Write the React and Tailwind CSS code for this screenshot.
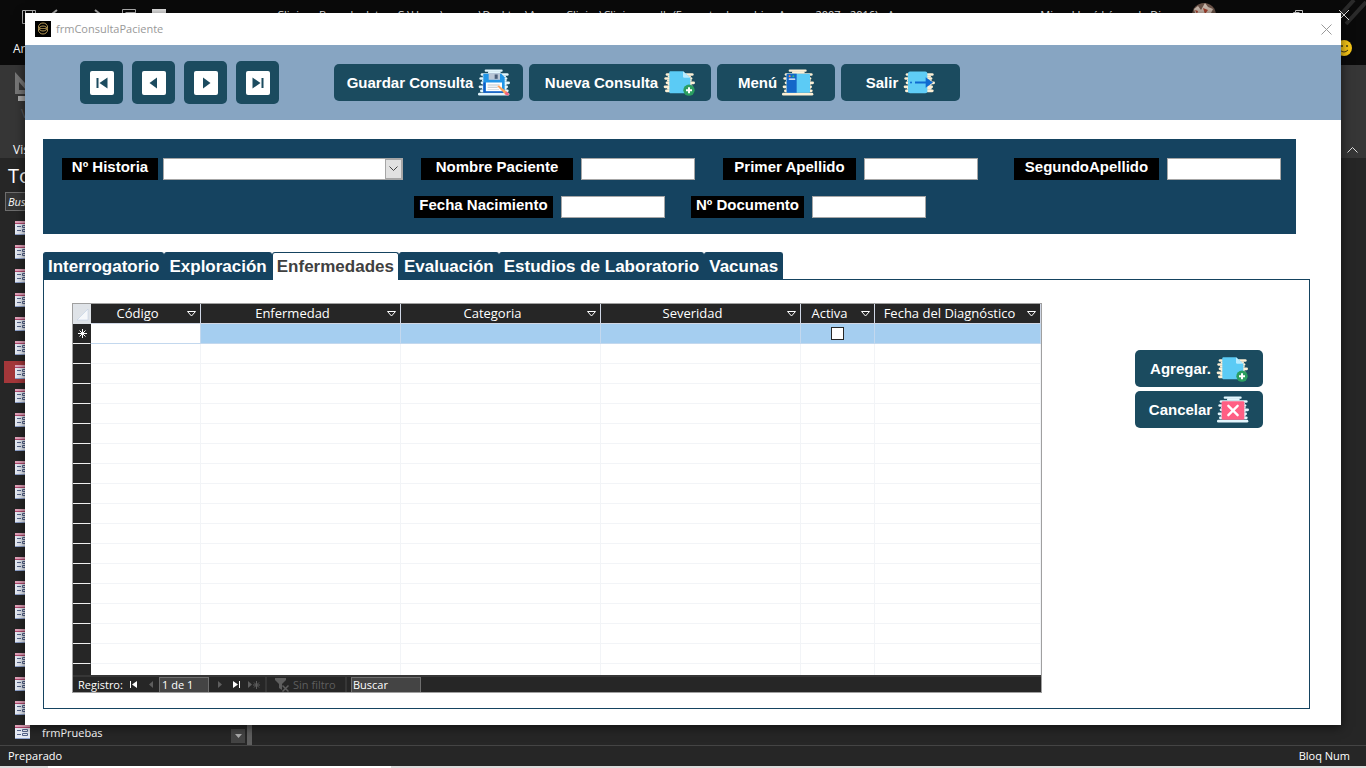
import React, { useState } from 'react';

const TABS = [
    'Interrogatorio',
    'Exploración',
    'Enfermedades',
    'Evaluación',
    'Estudios de Laboratorio',
    'Vacunas',
];

const COLUMNS = [
    { name: 'Código', width: 'w-[110px]' },
    { name: 'Enfermedad', width: 'w-[200px]' },
    { name: 'Categoria', width: 'w-[200px]' },
    { name: 'Severidad', width: 'w-[200px]' },
    { name: 'Activa', width: 'w-[74px]' },
    { name: 'Fecha del Diagnóstico', width: 'w-[166px]' },
];

const EMPTY_ROWS = Array.from({ length: 16 }, (_, i) => i);
const NAV_ITEMS = Array.from({ length: 22 }, (_, i) => i);

/* ---------- Iconos ---------- */

// Rayas claras que quedan detrás de cada icono
function Stripes({ color, full }) {
    return (
        <g fill={color}>
            {full && <rect x="20" y="1" width="54" height="7" rx="3" />}
            {full && <rect x="30" y="6" width="38" height="7" rx="3" />}
            <rect x="8" y="12" width="84" height="8" rx="4" />
            <rect x="14" y="19" width="70" height="6" rx="3" />
            <rect x="4" y="24" width="84" height="8" rx="4" />
            <rect x="12" y="31" width="74" height="7" rx="3" />
            <rect x="8" y="37" width="88" height="8" rx="4" />
            <rect x="14" y="44" width="72" height="6" rx="3" />
            <rect x="2" y="49" width="88" height="8" rx="4" />
            <rect x="12" y="56" width="74" height="6" rx="3" />
            <rect x="6" y="61" width="86" height="8" rx="4" />
            {full && <rect x="0" y="71" width="94" height="8" rx="4" />}
        </g>
    );
}

function SaveIcon() {
    return (
        <svg width="32" height="27" viewBox="0 0 96 80" aria-hidden="true">
            <Stripes color="#e3f6fd" full />
            <path d="M16 14h54l10 10v46H16z" fill="#2196e8" />
            <path d="M16 40v31h60v-5H22V40z" fill="#1259c4" />
            <path d="M32 12h34v20H32z" fill="#b9c6d6" />
            <path d="M50 16h9v13h-9z" fill="#4a5f7a" />
            <path d="M24 40h48v26H24z" fill="#fff" />
            <path d="M29 46h36v3H29zM29 53h30v3H29zM29 60h34v2H29z" fill="#b8c4cc" />
            <path d="M58 51l5-2 25 20-6 7z" fill="#ffa45c" />
            <path d="M84 66l10 8-4 6-10-5z" fill="#f2637e" />
        </svg>
    );
}

function AddFileIcon() {
    return (
        <svg width="32" height="27" viewBox="0 0 96 80" aria-hidden="true">
            <Stripes color="#fdf0d5" />
            <path d="M22 6h38l22 20v42a4 4 0 0 1-4 4H22a3 3 0 0 1-3-3V9a3 3 0 0 1 3-3z" fill="#5bcbf5" />
            <path d="M60 6l22 20H64a4 4 0 0 1-4-4z" fill="#b8ecff" />
            <circle cx="78" cy="63" r="17" fill="#2b9e60" />
            <path d="M75 54h6v6h6v6h-6v6h-6v-6h-6v-6h6z" fill="#fff" />
        </svg>
    );
}

function MenuIcon() {
    return (
        <svg width="32" height="27" viewBox="0 0 96 80" aria-hidden="true">
            <Stripes color="#fdf0d5" full />
            <rect x="14" y="14" width="70" height="57" rx="3" fill="#5ccbf5" />
            <path d="M17 14h27v57H17a3 3 0 0 1-3-3V17a3 3 0 0 1 3-3z" fill="#1467c8" />
            <circle cx="23" cy="21" r="3" fill="#ff9248" />
            <circle cx="34" cy="21" r="3" fill="#38c172" />
            <rect x="20" y="28" width="20" height="4" rx="2" fill="#fff" />
        </svg>
    );
}

function ExitIcon() {
    return (
        <svg width="32" height="27" viewBox="0 0 96 80" aria-hidden="true">
            <Stripes color="#fdf0d5" />
            <rect x="15" y="7" width="58" height="65" rx="6" fill="#5fcdf6" />
            <circle cx="24" cy="40" r="3" fill="#0f6bd0" />
            <path d="M36 37h32V24l22 16-22 16V43H36z" fill="#0f6bd0" />
        </svg>
    );
}

function CancelIcon() {
    return (
        <svg width="32" height="27" viewBox="0 0 96 80" aria-hidden="true">
            <Stripes color="#e3f6fd" full />
            <rect x="14" y="15" width="68" height="56" rx="4" fill="#ff5f84" />
            <path d="M34 29l28 28M62 29L34 57" stroke="#fff" strokeWidth="7" strokeLinecap="round" />
        </svg>
    );
}

function FormIcon() {
    return (
        <svg width="15" height="14" viewBox="0 0 15 14" className="shrink-0" aria-hidden="true">
            <path d="M0 0h15v14H0z" fill="#e6ebf5" />
            <path d="M0 0h15v2H0z" fill="#e2a3ba" />
            <path d="M0 2h15v1H0z" fill="#b3486e" />
            <path d="M2 5.500h4M2 9.500h4M7.500 4.500h5v2h-5zM7.500 8.500h5v2h-5z" fill="none" stroke="#56658c" />
            <path d="M0 13h15v1H0z" fill="#8ea2cc" />
        </svg>
    );
}

function NavIcon({ path }) {
    return (
        <svg width="24" height="24" viewBox="0 0 24 24" aria-hidden="true">
            <rect width="24" height="24" rx="2" fill="#fff" />
            <path d={path} fill="#1b4b5f" />
        </svg>
    );
}

/* ---------- Controles ---------- */

const NAV_BUTTONS = [
    { label: 'Primer registro', path: 'M6.500 7h2v10h-2zM17.500 6.500v11L9.500 12z' },
    { label: 'Registro anterior', path: 'M15 6.500v11L7.500 12z' },
    { label: 'Registro siguiente', path: 'M9 6.500v11l7.500-5.500z' },
    { label: 'Último registro', path: 'M15.500 7h2v10h-2zM6.500 6.500v11l8-5.500z' },
];

function ActionButton({ children, icon, width }) {
    return (
        <button
            type="button"
            className={`flex h-[37px] items-center justify-center gap-[5px] rounded-[5px] bg-[#1b4b5f] font-['Liberation_Sans',sans-serif] text-[15px] font-bold text-white ${width}`}
        >
            <span className="pt-[2px]">{children}</span>
            {icon}
        </button>
    );
}

function Field({ id, label, labelWidth, inputWidth, select }) {
    return (
        <div className={`flex ${select ? 'gap-[5px]' : 'gap-2'}`}>
            <label htmlFor={id} className={`h-[22px] shrink-0 bg-black text-center leading-[18px] ${labelWidth}`}>
                {label}
            </label>
            {select ? (
                <div className="relative">
                    <select id={id} className={`block h-[22px] appearance-none border border-[#a6a6a6] bg-white text-black ${inputWidth}`} />
                    <span className="pointer-events-none absolute top-px right-px flex h-5 w-[17px] items-center justify-center border border-[#a6a6a6] bg-[#e1e1e1]">
                        <svg width="9" height="6" viewBox="0 0 9 6" fill="none" stroke="#444" aria-hidden="true">
                            <path d="M.5.5l4 4 4-4" />
                        </svg>
                    </span>
                </div>
            ) : (
                <input id={id} type="text" className={`block h-[22px] border border-[#a6a6a6] bg-white px-1 text-black ${inputWidth}`} />
            )}
        </div>
    );
}

function Datasheet() {
    return (
        <div className="w-[970px] border border-[#a0a0a0]">
            <table className="w-full table-fixed border-separate border-spacing-0 text-[13px] leading-[19px]">
                <thead>
                    <tr className="h-5 bg-[#262626] text-white">
                        <th className="w-[18px] border-r border-b border-[#dfe3e8] bg-[#dfe3e8] p-0">
                            <svg width="17" height="19" viewBox="0 0 17 19" aria-hidden="true">
                                <path d="M15 5v11H4z" fill="#f6f8fa" stroke="#b9cbe0" strokeWidth=".5" />
                            </svg>
                        </th>
                        {COLUMNS.map((col) => (
                            <th key={col.name} className={`border-r border-b border-[#d0d7e5] p-0 font-normal ${col.width}`}>
                                <div className="flex items-center pr-1">
                                    <span className="flex-1 pr-[3px] text-center whitespace-nowrap">{col.name}</span>
                                    <svg width="9" height="6" viewBox="0 0 9 6" fill="none" stroke="#fff" aria-hidden="true">
                                        <path d="M.5.5h8l-4 4.500z" />
                                    </svg>
                                </div>
                            </th>
                        ))}
                    </tr>
                </thead>
                <tbody>
                    <tr className="h-5 bg-[#a5cef0]">
                        <td className="border-r border-b border-[#f0f0f0] border-r-[#262626] bg-[#262626] p-0">
                            <svg width="17" height="19" viewBox="0 0 17 19" stroke="#fff" aria-hidden="true">
                                <path d="M9.500 5v9M5 9.500h9M6.500 6.500l6 6M12.500 6.500l-6 6" />
                            </svg>
                        </td>
                        {COLUMNS.map((col, i) => (
                            <td key={col.name} className={`border-r border-b border-[#c3d8ee] p-0 ${i === 0 ? 'bg-white' : ''}`}>
                                {col.name === 'Activa' && (
                                    <input
                                        type="checkbox"
                                        aria-label="Activa"
                                        className="mx-auto block size-[13px] appearance-none border border-[#262626] bg-white"
                                    />
                                )}
                            </td>
                        ))}
                    </tr>
                    {EMPTY_ROWS.map((row) => (
                        <tr key={row} className="h-5">
                            <td className="border-r border-b border-[#f0f0f0] border-r-[#262626] bg-[#262626] p-0" />
                            {COLUMNS.map((col) => (
                                <td key={col.name} className="border-r border-b border-[#f2f4f7] p-0" />
                            ))}
                        </tr>
                    ))}
                    <tr className="h-[11px]">
                        <td className="bg-[#262626] p-0" />
                        {COLUMNS.map((col) => (
                            <td key={col.name} className="border-r border-[#f2f4f7] p-0" />
                        ))}
                    </tr>
                </tbody>
            </table>

            {/* Barra de registros */}
            <div className="flex h-[17px] items-center border-t-2 border-[#363636] bg-[#262626] text-[11px] text-white">
                <span className="w-[57px] pt-px pl-[5px]">Registro:</span>
                <button type="button" aria-label="Primero" className="w-[14px]">
                    <svg width="8" height="7" viewBox="0 0 8 7" fill="#fff"><path d="M0 0h1v7H0zM7 0v7L2 3.500z" /></svg>
                </button>
                <button type="button" aria-label="Anterior" className="flex w-[15px] justify-center">
                    <svg width="5" height="7" viewBox="0 0 5 7" fill="#5e5e5e"><path d="M4 0v7L0 3.500z" /></svg>
                </button>
                <input
                    aria-label="Registro actual"
                    defaultValue="1 de 1"
                    className="h-[15px] w-[50px] border border-b-0 border-[#6e6e6e] bg-[#444] px-[2px]"
                />
                <button type="button" aria-label="Siguiente" className="flex w-[22px] justify-center">
                    <svg width="5" height="7" viewBox="0 0 5 7" fill="#5e5e5e"><path d="M0 0v7l4-3.500z" /></svg>
                </button>
                <button type="button" aria-label="Último" className="flex w-3 justify-center">
                    <svg width="8" height="7" viewBox="0 0 8 7" fill="#fff"><path d="M6 0h1v7H6zM0 0v7l5-3.500z" /></svg>
                </button>
                <button type="button" aria-label="Nuevo" className="flex w-[22px] justify-center">
                    <svg width="13" height="8" viewBox="0 0 13 8" fill="#5e5e5e" stroke="#5e5e5e">
                        <path d="M0 0v7l4-3.500z" stroke="none" />
                        <path d="M8.500 0v8M5 4h7M6 1.500l5 5M11 1.500l-5 5" />
                    </svg>
                </button>
                <span className="mr-2 h-[15px] w-[2px] bg-[#363636]" />
                <svg width="14" height="14" viewBox="0 0 14 14" fill="#5e5e5e" aria-hidden="true">
                    <path d="M0 0h11v2L7 6v6l-3-2V6L0 2z" />
                    <path d="M7.500 7.500l6 6M13.500 7.500l-6 6" stroke="#5e5e5e" strokeWidth="1.500" />
                </svg>
                <span className="w-[56px] pt-px pl-1 whitespace-nowrap text-[#5e5e5e]">Sin filtro</span>
                <span className="h-[15px] w-[2px] bg-[#363636]" />
                <input
                    aria-label="Buscar registro"
                    defaultValue="Buscar"
                    className="ml-1 h-[15px] w-[70px] border border-b-0 border-[#6e6e6e] bg-[#444] px-px"
                />
            </div>
        </div>
    );
}

/* ---------- Ventana de Access al fondo ---------- */

function AccessShell() {
    return (
        <div className="flex min-h-screen flex-col overflow-hidden bg-[#262626] text-white">
            <header className="flex h-[65px] flex-col bg-[#0a0a0a]">
                <div className="flex h-7 items-center">
                    <svg width="150" height="28" viewBox="0 0 150 28" className="ml-[22px]" fill="none" stroke="#b5b5b5" aria-hidden="true">
                        <path d="M.5 10.500h13v13H.5zM3.500 10.500v4h7v-4" />
                        <path d="M35 10l-5 4 5 4M73 10l5 4-5 4" strokeWidth="2" />
                        <path d="M100.500 9.500h13v10h-13zM103.500 12.500h10" />
                        <path d="M130 9h14v5h-14z" fill="#e5e5e5" stroke="none" />
                    </svg>
                    <p className="flex-1 pt-[2px] pl-[105px] text-[11px] whitespace-nowrap">
                        Clinica : Base de datos- C:\Users\gomez\Desktop\Access Clinica\Clinica.accdb (Formato de archivo Access 2007 - 2016) - Access
                    </p>
                    <p className="pt-[2px] pr-[13px] text-[11px] whitespace-nowrap">Miguel José López de Dios</p>
                    <svg width="180" height="28" viewBox="0 0 180 28" aria-hidden="true">
                        <path d="M146 24L168 0M160 24L180 2" stroke="#2a2a2a" strokeWidth="4" />
                        <circle cx="18" cy="15" r="12" fill="#6b5348" />
                        <path d="M8 9l4-3 3 4 4-7 3 4 5 2-2 4H9z" fill="#c9b8ac" />
                        <path d="M9 10l3 1-1 3zM17 8l5 2-3 4z" fill="#a8412e" />
                        <path d="M107.500 12.500h6M107.500 12.500v3M109.500 12.500v-2h7v6" fill="none" stroke="#ddd" />
                        <path d="M153 10l10 10M163 10l-10 10" stroke="#ddd" />
                    </svg>
                </div>
                <div className="flex flex-1 items-center justify-between pt-1 pr-[14px] pl-[13px] text-xs">
                    <span>Archivo</span>
                    <svg width="18" height="18" viewBox="0 0 18 18" aria-hidden="true">
                        <circle cx="10" cy="8" r="8" fill="#f5c518" />
                        <circle cx="8" cy="6" r="1" fill="#453a10" />
                        <circle cx="13" cy="6" r="1" fill="#453a10" />
                        <path d="M6 10q4 4 8 0" fill="none" stroke="#453a10" />
                    </svg>
                </div>
            </header>

            <div className="flex h-[93px] items-end justify-between bg-[#363636] pr-2 pl-[13px] text-xs">
                <div className="flex flex-col gap-1">
                    <svg width="24" height="30" viewBox="0 0 24 30" aria-hidden="true">
                        <path d="M2 0l20 22H2zM6 10v8h7z" fill="#777" fillRule="evenodd" />
                        <path d="M5 24h18v5H5z" fill="#aaa" />
                    </svg>
                    <span className="pb-4 pl-2 text-[#5a5a5a]">Ver</span>
                    <span>Vistas</span>
                </div>
                <svg width="11" height="16" viewBox="0 0 11 16" fill="none" stroke="#ddd" aria-hidden="true">
                    <path d="M.5 10.500l5-5 5 5" />
                </svg>
            </div>

            <div className="flex flex-1">
                <nav className="w-[247px]">
                    <h2 className="h-[34px] pl-2 text-xl leading-[36px]">Todos</h2>
                    <input
                        aria-label="Buscar objetos"
                        placeholder="Buscar..."
                        className="ml-[5px] block h-[19px] w-[220px] border border-[#6e6e6e] bg-[#363636] px-[2px] text-[11px] italic placeholder:text-white"
                    />
                    <ul className="pt-[5px]">
                        {NAV_ITEMS.map((i) => (
                            <li key={i} className="flex h-6 items-center pr-[2px] pl-1">
                                <div className={`flex h-[22px] flex-1 items-center gap-3 pl-[11px] text-[11px] ${i === 6 ? 'bg-[#a4373a]' : ''}`}>
                                    <FormIcon />
                                    {i === 21 && <span className="pt-[2px]">frmPruebas</span>}
                                </div>
                                {i === 21 && (
                                    <span className="mt-2 flex size-[14px] items-center justify-center bg-[#444]">
                                        <svg width="7" height="4" viewBox="0 0 7 4" fill="#aaa" aria-hidden="true"><path d="M0 0h7L3.500 4z" /></svg>
                                    </span>
                                )}
                            </li>
                        ))}
                    </ul>
                </nav>
                <div className="w-[5px] bg-[#5e5e5e]" />
            </div>

            <footer className="flex h-[21px] items-center justify-between border-t border-[#444] pr-4 pl-2 text-[11px]">
                <span>Preparado</span>
                <span>Bloq Num</span>
            </footer>
            <div className="h-[2px] bg-[#dcdcdc] px-12">
                <div className="h-full w-[343px] bg-white" />
            </div>
        </div>
    );
}

export default function App() {
    const [activeTab, setActiveTab] = useState('Enfermedades');

    return (
        <div className="relative font-['Open_Sans',sans-serif]">
            <AccessShell />

            {/* Formulario de consulta */}
            <main className="absolute inset-x-[25px] top-[13px] bg-white pb-4 shadow-[0_2px_10px_rgba(0,0,0,0.6)]">
                <div className="flex h-8 items-center gap-[5px] pr-[9px] pl-[10px] text-[11px] text-[#999]">
                    <svg width="16" height="16" viewBox="0 0 16 16" aria-hidden="true">
                        <path d="M0 0h16v16H0z" fill="#000" />
                        <ellipse cx="8" cy="6" rx="4.500" ry="4" fill="none" stroke="#b89a55" />
                        <ellipse cx="8" cy="9" rx="4.500" ry="4" fill="none" stroke="#b89a55" />
                        <path d="M3 7.500h10" stroke="#8f7740" />
                    </svg>
                    <h1 className="flex-1">frmConsultaPaciente</h1>
                    <button type="button" aria-label="Cerrar">
                        <svg width="11" height="11" viewBox="0 0 11 11" stroke="#999" aria-hidden="true">
                            <path d="M.5.5l10 10M10.500.5l-10 10" />
                        </svg>
                    </button>
                </div>

                <div className="flex h-[75px] items-center bg-[#87a5c2] pl-[55px]">
                    <div className="flex gap-[9px]">
                        {NAV_BUTTONS.map((btn) => (
                            <button
                                key={btn.label}
                                type="button"
                                aria-label={btn.label}
                                className="flex size-[43px] items-center justify-center rounded-[5px] bg-[#1b4b5f]"
                            >
                                <NavIcon path={btn.path} />
                            </button>
                        ))}
                    </div>
                    <div className="ml-[55px] flex gap-[6px]">
                        <ActionButton width="w-[189px]" icon={<SaveIcon />}>Guardar Consulta</ActionButton>
                        <ActionButton width="w-[182px]" icon={<AddFileIcon />}>Nueva Consulta</ActionButton>
                        <ActionButton width="w-[118px]" icon={<MenuIcon />}>Menú</ActionButton>
                        <ActionButton width="w-[119px]" icon={<ExitIcon />}>Salir</ActionButton>
                    </div>
                </div>

                {/* Datos del paciente */}
                <section className="mt-[19px] mr-[45px] ml-[18px] flex h-[95px] flex-col gap-4 bg-[#154360] pt-[19px] pl-[19px] font-['Liberation_Sans',sans-serif] text-[15px] font-bold text-white">
                    <div className="grid grid-cols-[359px_302px_291px_268px]">
                        <Field id="historia" label="Nº Historia" labelWidth="w-[96px]" inputWidth="w-[240px]" select />
                        <Field id="nombre" label="Nombre Paciente" labelWidth="w-[152px]" inputWidth="w-[114px]" />
                        <Field id="apellido1" label="Primer Apellido" labelWidth="w-[133px]" inputWidth="w-[114px]" />
                        <Field id="apellido2" label="SegundoApellido" labelWidth="w-[145px]" inputWidth="w-[114px]" />
                    </div>
                    <div className="grid grid-cols-[277px_268px] pl-[352px]">
                        <Field id="nacimiento" label="Fecha Nacimiento" labelWidth="w-[139px]" inputWidth="w-[104px]" />
                        <Field id="documento" label="Nº Documento" labelWidth="w-[113px]" inputWidth="w-[114px]" />
                    </div>
                </section>

                {/* Pestañas */}
                <div className="mt-[18px] mr-[31px] ml-[18px]">
                    <div role="tablist" className="flex font-['Liberation_Sans',sans-serif] text-[17px] font-bold">
                        {TABS.map((tab) => (
                            <button
                                key={tab}
                                role="tab"
                                type="button"
                                aria-selected={tab === activeTab}
                                onClick={() => setActiveTab(tab)}
                                className={`h-7 rounded-t-[3px] border border-b-0 border-[#154360] px-1 whitespace-nowrap ${tab === activeTab ? 'bg-white text-[#404040]' : 'bg-[#154360] text-white'}`}
                            >
                                {tab}
                            </button>
                        ))}
                    </div>
                    <div className="-mt-px flex items-start justify-between border border-[#154360] pt-[23px] pr-[46px] pb-[15px] pl-[28px]">
                        <Datasheet />
                        <div className="flex flex-col gap-1 pt-[47px]">
                            <ActionButton width="w-32" icon={<AddFileIcon />}>Agregar.</ActionButton>
                            <ActionButton width="w-32" icon={<CancelIcon />}>Cancelar</ActionButton>
                        </div>
                    </div>
                </div>
            </main>
        </div>
    );
}
